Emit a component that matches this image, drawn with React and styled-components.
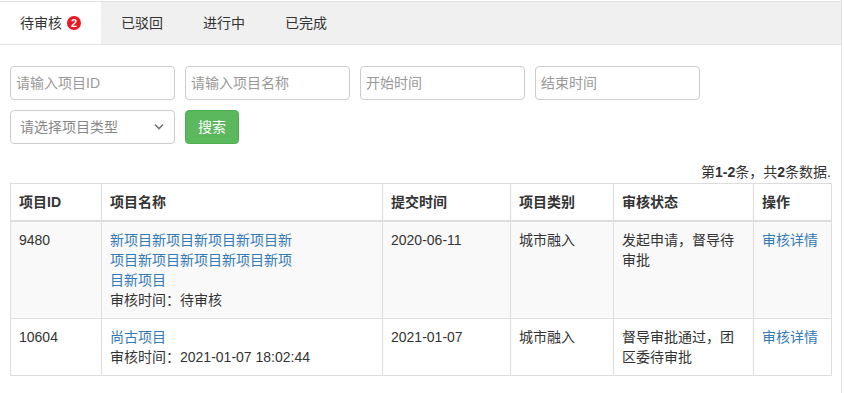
import React from "react";
import styled, { createGlobalStyle } from "styled-components";

const GlobalStyle = createGlobalStyle`
  html, body {
    margin: 0;
    padding: 0;
    background: #fff;
  }
  body {
    font-family: "Liberation Sans", "Noto Sans CJK SC", sans-serif;
    font-size: 14px;
    line-height: 20px;
    color: #333;
  }
  * {
    box-sizing: border-box;
  }
`;

const Page = styled.div`
  width: 842px;
  min-height: 393px;
  border-right: 1px solid #e3e3e3;
  padding-top: 1px;
`;

const TabBar = styled.ul`
  display: flex;
  margin: 0;
  padding: 0;
  list-style: none;
  height: 44px;
  background: #f0f0f0;
  border-top: 1px solid #e3e3e3;
  border-bottom: 1px solid #e3e3e3;
`;

const Tab = styled.li`
  display: flex;
  align-items: center;
  gap: 5px;
  padding: 0 20px;
  height: 42px;
  background: ${(p) => (p.$active ? "#fff" : "transparent")};
  color: #333;
  cursor: pointer;
`;

const Badge = styled.span`
  display: inline-flex;
  align-items: center;
  justify-content: center;
  width: 14px;
  height: 14px;
  border-radius: 50%;
  background: #f0141e;
  color: #fff;
  font-size: 11px;
  font-weight: bold;
  line-height: 14px;
`;

const Body = styled.div`
  padding: 21px 10px 0 10px;
`;

const Filters = styled.div`
  display: flex;
  flex-direction: column;
  gap: 10px;
`;

const FilterRow = styled.div`
  display: flex;
  gap: 10px;
`;

const Input = styled.input`
  width: 165px;
  height: 34px;
  padding: 0 5px;
  border: 1px solid #ccc;
  border-radius: 4px;
  font: inherit;
  color: #555;
  outline: none;
  &::placeholder {
    color: #999;
  }
`;

const SelectWrap = styled.div`
  position: relative;
  width: 165px;
  height: 34px;
`;

const Select = styled.select`
  width: 100%;
  height: 100%;
  padding: 0 24px 0 9px;
  border: 1px solid #ccc;
  border-radius: 4px;
  background: #fff;
  font: inherit;
  color: #888;
  appearance: none;
  outline: none;
`;

const Chevron = styled.svg`
  position: absolute;
  right: 11px;
  top: 13px;
  pointer-events: none;
`;

const Button = styled.button`
  height: 34px;
  padding: 0 12px;
  border: 1px solid #4cae4c;
  border-radius: 4px;
  background: #5cb85c;
  color: #fff;
  font: inherit;
  cursor: pointer;
`;

const Summary = styled.div`
  margin-top: 18px;
  text-align: right;
  b {
    font-weight: bold;
  }
`;

const Table = styled.table`
  width: 821px;
  margin-top: 1px;
  border-collapse: collapse;
  border: 1px solid #ddd;
  table-layout: fixed;
`;

const Th = styled.th`
  padding: 8px;
  text-align: left;
  font-weight: bold;
  border: 1px solid #ddd;
  border-bottom: 2px solid #ddd;
  vertical-align: bottom;
`;

const Tr = styled.tr`
  background: ${(p) => (p.$striped ? "#f9f9f9" : "#fff")};
`;

const Td = styled.td`
  padding: 8px;
  border: 1px solid #ddd;
  vertical-align: top;
`;

const Link = styled.a`
  color: #337ab7;
  text-decoration: none;
  cursor: pointer;
`;

const NameLink = styled(Link)`
  display: block;
  max-width: 188px;
`;

const tabs = [
  { label: "待审核", badge: 2, active: true },
  { label: "已驳回" },
  { label: "进行中" },
  { label: "已完成" },
];

const rows = [
  {
    id: "9480",
    name: "新项目新项目新项目新项目新项目新项目新项目新项目新项目新项目",
    reviewed: "待审核",
    date: "2020-06-11",
    type: "城市融入",
    status: "发起申请，督导待审批",
  },
  {
    id: "10604",
    name: "尚古项目",
    reviewed: "2021-01-07 18:02:44",
    date: "2021-01-07",
    type: "城市融入",
    status: "督导审批通过，团区委待审批",
  },
];

const App = () => {
  return (
    <Page>
      <GlobalStyle />
      <TabBar>
        {tabs.map((t) => (
          <Tab key={t.label} $active={t.active}>
            {t.label}
            {t.badge && <Badge>{t.badge}</Badge>}
          </Tab>
        ))}
      </TabBar>
      <Body>
        <Filters>
          <FilterRow>
            <Input placeholder="请输入项目ID" />
            <Input placeholder="请输入项目名称" />
            <Input placeholder="开始时间" />
            <Input placeholder="结束时间" />
          </FilterRow>
          <FilterRow>
            <SelectWrap>
              <Select defaultValue="">
                <option value="">请选择项目类型</option>
                <option value="1">城市融入</option>
              </Select>
              <Chevron width="10" height="7" viewBox="0 0 10 7">
                <path d="M1 1.5 L5 5.5 L9 1.5" fill="none" stroke="#777" strokeWidth="1.6" />
              </Chevron>
            </SelectWrap>
            <Button>搜索</Button>
          </FilterRow>
        </Filters>
        <Summary>
          第<b>1-2</b>条，共<b>2</b>条数据.
        </Summary>
        <Table>
          <colgroup>
            <col style={{ width: 91 }} />
            <col style={{ width: 281 }} />
            <col style={{ width: 128 }} />
            <col style={{ width: 103 }} />
            <col style={{ width: 140 }} />
            <col style={{ width: 78 }} />
          </colgroup>
          <thead>
            <tr>
              <Th>项目ID</Th>
              <Th>项目名称</Th>
              <Th>提交时间</Th>
              <Th>项目类别</Th>
              <Th>审核状态</Th>
              <Th>操作</Th>
            </tr>
          </thead>
          <tbody>
            {rows.map((r, i) => (
              <Tr key={r.id} $striped={i % 2 === 0}>
                <Td>{r.id}</Td>
                <Td>
                  <NameLink>{r.name}</NameLink>
                  审核时间：{r.reviewed}
                </Td>
                <Td>{r.date}</Td>
                <Td>{r.type}</Td>
                <Td>{r.status}</Td>
                <Td>
                  <Link>审核详情</Link>
                </Td>
              </Tr>
            ))}
          </tbody>
        </Table>
      </Body>
    </Page>
  );
};

export default App;
